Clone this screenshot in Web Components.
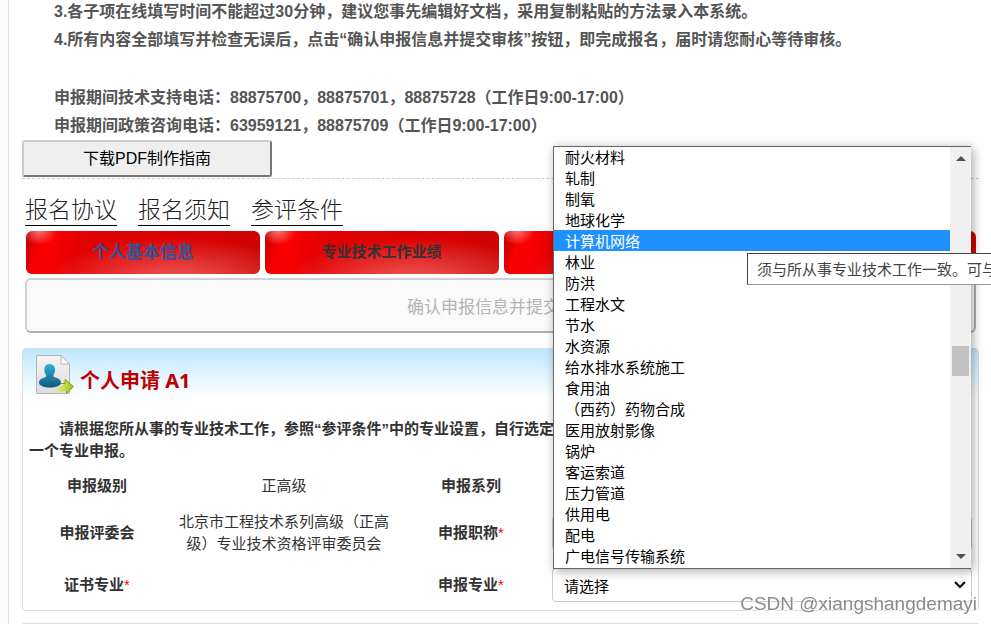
<!DOCTYPE html>
<html lang="zh-CN">
<head>
  <meta charset="utf-8">
  <title>个人申请</title>
  <style>
    body {
      margin: 0;
      overflow: hidden;
      background: #fafafa;
      color: #333;
      font: 15px/22px "Liberation Sans", "Noto Sans CJK SC", sans-serif;
    }
  </style>
</head>
<body>
  <apply-page>
    <notice-text>
      <p>3.各子项在线填写时间不能超过30分钟，建议您事先编辑好文档，采用复制粘贴的方法录入本系统。</p>
      <p>4.所有内容全部填写并检查无误后，点击“确认申报信息并提交审核”按钮，即完成报名，届时请您耐心等待审核。</p>
      <p class="gap">申报期间技术支持电话：88875700，88875701，88875728（工作日9:00-17:00）</p>
      <p>申报期间政策咨询电话：63959121，88875709（工作日9:00-17:00）</p>
    </notice-text>
    <guide-bar>下载PDF制作指南</guide-bar>
    <doc-links></doc-links>
    <step-tabs>
      <step-tab active>个人基本信息</step-tab>
      <step-tab>专业技术工作业绩</step-tab>
      <step-tab></step-tab>
      <step-tab></step-tab>
    </step-tabs>
    <submit-bar>确认申报信息并提交审核</submit-bar>
    <form-card>
      <span slot="title">个人申请 A1</span>
      <span slot="intro">请根据您所从事的专业技术工作，参照“参评条件”中的专业设置，自行选定<br>一个专业申报。</span>
      <apply-table></apply-table>
    </form-card>
    <form-card empty></form-card>
  </apply-page>
  <water-mark>CSDN @xiangshangdemayi</water-mark>

  <script>
    // small helper, every element here only needs a shadow root with markup
    function define(name, html, setup) {
      customElements.define(name, class extends HTMLElement {
        constructor() {
          super()
          this.attachShadow({ mode: 'open' })
          this.shadowRoot.innerHTML = html
        }

        connectedCallback() {
          if (setup) setup(this, this.shadowRoot)
        }
      })
    }

    define('apply-page', `
      <style>
        :host {
          display: block;
          margin-left: 8px;
          padding: 0 12px 0 13px;
          border-left: 1px solid #ddd;
          background: #fff;
        }
      </style>
      <slot></slot>
    `)

    define('notice-text', `
      <style>
        :host {
          display: block;
          margin-top: -2px;
          padding: 0 32px;
          color: #555;
          font-size: 16px;
          font-weight: bold;
          line-height: 28px;
          white-space: nowrap;
        }
        ::slotted(p) { margin: 0; }
        ::slotted(.gap) { margin-top: 30px; }
      </style>
      <slot></slot>
    `)

    define('guide-bar', `
      <style>
        :host {
          display: block;
          padding-bottom: 1px;
          border-bottom: 1px dashed #ccc;
        }
        button {
          display: block;
          width: 250px;
          height: 37px;
          padding: 0 0 3px;
          border: 2px solid;
          border-color: #ccc #767676 #767676 #ccc;
          border-radius: 3px;
          background: #efefef;
          color: #000;
          font: 16px "Liberation Sans", "Noto Sans CJK SC", sans-serif;
        }
      </style>
      <button type="button"><slot></slot></button>
    `)

    define('doc-links', `
      <style>
        :host {
          display: flex;
          gap: 21px;
          padding: 16px 3px 5px;
        }
        a {
          border-bottom: 1px solid #000;
          color: #222;
          font-size: 23px;
          font-weight: 300;
          line-height: 30px;
          text-decoration: none;
        }
      </style>
      <a href="#agreement">报名协议</a>
      <a href="#notice">报名须知</a>
      <a href="#conditions">参评条件</a>
    `)

    define('step-tabs', `
      <style>
        :host {
          display: flex;
          gap: 5px;
          padding: 0 3px 0 4px;
        }
      </style>
      <slot></slot>
    `)

    define('step-tab', `
      <style>
        :host { display: block; flex: 1; }
        button {
          display: block;
          width: 100%;
          height: 43px;
          padding: 0 0 4px;
          border: 0;
          border-radius: 6px;
          background:
            radial-gradient(ellipse 18px 14px at 13px 0, rgba(255, 150, 150, .75), transparent),
            radial-gradient(ellipse 55% 100% at 64% 115%, rgba(255, 150, 150, .6), transparent),
            linear-gradient(105deg, #b80000 0, #f80000 7%, #fa0000 12%, #e20000 24%, #d80000 70%, #cc0404);
          color: #333;
          font: bold 15px "Noto Sans CJK SC", sans-serif;
        }
        :host([active]) button { color: #2f549b; font-size: 17px; }
      </style>
      <button type="button"><slot></slot></button>
    `)

    define('submit-bar', `
      <style>
        :host { display: block; padding: 4px 3px 15px; }
        button {
          display: block;
          width: 100%;
          height: 55px;
          border: 2px solid;
          border-color: #d0d0d0 #b0b0b0 #b0b0b0 #d0d0d0;
          border-radius: 6px;
          background: #fafafa;
          color: #b4b4b4;
          font: 17px "Noto Sans CJK SC", sans-serif;
        }
      </style>
      <button type="button" disabled><slot></slot></button>
    `)

    define('form-card', `
      <style>
        :host {
          display: block;
          margin-bottom: 12px;
          padding: 6px 6px 3px;
          border: 1px solid #ddd;
          border-radius: 4px;
          background: linear-gradient(#bfe7ff, #fff 48px);
        }
        :host([empty]) {
          margin-bottom: 0;
          padding: 1px 0 0;
          border-bottom: 0;
          border-radius: 4px 4px 0 0;
          background: #fff;
        }
        :host([empty]) header, :host([empty]) p { display: none; }
        header { display: flex; gap: 5px; padding-left: 6px; }
        h2 {
          margin: 0;
          padding-top: 11px;
          color: #b00;
          font: bold 20px/30px "Noto Sans", "Noto Sans CJK SC", sans-serif;
        }
        p {
          margin: 22px 0 7px;
          font-weight: bold;
          line-height: 22px;
          text-indent: 30px;
          white-space: nowrap;
        }
      </style>
      <header>
        <svg width="40" height="41" viewBox="0 0 40 41" aria-hidden="true">
          <defs>
            <linearGradient id="paper" x2="0" y2="1">
              <stop stop-color="#f4f4f4"/><stop offset="1" stop-color="#dcdcdc"/>
            </linearGradient>
            <linearGradient id="person" x2="0" y2="1">
              <stop stop-color="#2cb2dc"/><stop offset="1" stop-color="#10597b"/>
            </linearGradient>
            <linearGradient id="arrow">
              <stop stop-color="#d8f07c" stop-opacity="0"/><stop offset=".5" stop-color="#cbe456"/><stop offset="1" stop-color="#97bf1c"/>
            </linearGradient>
          </defs>
          <path d="M1.500 .5H26L34.500 9V38.500H1.500Z" fill="url(#paper)" stroke="#b4b4b4"/>
          <path d="M26 .5V9H34.500Z" fill="#fff" stroke="#b4b4b4"/>
          <path d="M14.500 9C18.500 9 20.500 12 20 16C19.700 18 18 20 18.500 21.500C20 23 26 23 26 27.500C26 31 21 32.500 15 32.500S4 31 4 27.500C4 23 10 23 11 21.500C11.500 20 9.600 18 9.400 16C9 12 10.800 9 14.500 9Z" fill="url(#person)"/>
          <path d="M16 34Q25 33 30 28.500V24.500L38.500 31.500L31.500 38.500V36Q24 37 16 34Z" fill="url(#arrow)"/>
          <path d="M26 28.500H30V24.500L38.500 31.500L31.500 38.500V36" fill="none" stroke="#7ea31b"/>
        </svg>
        <h2><slot name="title"></slot></h2>
      </header>
      <p><slot name="intro"></slot></p>
      <slot></slot>
    `)

    define('apply-table', `
      <style>
        :host { display: block; }
        table {
          width: 100%;
          border-collapse: collapse;
          table-layout: fixed;
        }
        col.label { width: 136px; }
        col.value { width: 238px; }
        th, td { padding: 0 13px; text-align: center; }
        th { padding: 0; font-weight: bold; }
        td:last-child { padding: 0 0 0 13px; }
        tr { height: 34px; }
        tr.tall { height: 60px; }
        tr.last { height: 44px; }
        i { color: #f00; font-style: normal; font-weight: normal; }
      </style>
      <table>
        <colgroup><col class="label"><col class="value"><col class="label"><col></colgroup>
        <tr>
          <th>申报级别</th><td>正高级</td><th>申报系列</th><td></td>
        </tr>
        <tr class="tall">
          <th>申报评委会</th><td>北京市工程技术系列高级（正高级）专业技术资格评审委员会</td>
          <th>申报职称<i>*</i></th><td><pick-field label="申报职称"></pick-field></td>
        </tr>
        <tr class="last">
          <th>证书专业<i>*</i></th><td></td>
          <th>申报专业<i>*</i></th>
          <td>
            <pick-field label="申报专业" value="请选择">
              <option-menu></option-menu>
            </pick-field>
          </td>
        </tr>
      </table>
    `)

    define('pick-field', `
      <style>
        :host { display: block; position: relative; }
        label { display: flex; position: relative; align-items: center; }
        select {
          appearance: none;
          width: 100%;
          height: 34px;
          padding: 0 11px;
          border: 1px solid #ccc;
          border-radius: 4px;
          background: #fff;
          color: #000;
          font: 15px "Noto Sans CJK SC", sans-serif;
        }
        svg { position: absolute; right: 6px; pointer-events: none; }
        slot {
          display: block;
          position: absolute;
          right: 1px;
          bottom: calc(100% - 1px);
          left: 1px;
          z-index: 2;
        }
      </style>
      <label>
        <select></select>
        <svg width="12" height="8" viewBox="0 0 12 8"><path d="M1 1L6 6L11 1" fill="none" stroke="#000" stroke-width="2"/></svg>
      </label>
      <slot></slot>
    `, (host, root) => {
      const select = root.querySelector('select')
      select.setAttribute('aria-label', host.getAttribute('label'))
      if (host.hasAttribute('value')) {
        select.innerHTML = `<option>${host.getAttribute('value')}</option>`
      }
    })

    const majors = ['耐火材料', '轧制', '制氧', '地球化学', '计算机网络', '林业', '防洪',
      '工程水文', '节水', '水资源', '给水排水系统施工', '食用油', '（西药）药物合成',
      '医用放射影像', '锅炉', '客运索道', '压力管道', '供用电', '配电', '广电信号传输系统']

    define('option-menu', `
      <style>
        :host {
          display: flex;
          border: 1px solid #666;
          border-right: 0;
          background: #fff;
          box-shadow: 2px 2px 10px rgba(0, 0, 0, .35);
          color: #000;
          font-family: "Noto Sans CJK SC", sans-serif;
        }
        ul {
          flex: 1;
          margin: -1px 0 2px;
          padding: 0;
          list-style: none;
          text-align: left;
        }
        li { padding: 0 11px; line-height: 21px; cursor: default; }
        li[aria-selected="true"] { background: #1e90ff; color: #fff; }
        .bar {
          display: flex;
          flex-direction: column;
          align-items: center;
          width: 21px;
          background: #f0f0f0;
        }
        .bar svg { margin: 9px 0 8px; }
        .bar svg:last-child { margin: 8px 0 9px; }
        .before { flex: 178; }
        .thumb { width: 17px; height: 30px; background: #c1c1c1; }
        .after { flex: 170; }
        hover-tip { position: absolute; top: 107px; left: 194px; }
      </style>
      <ul role="listbox" aria-label="申报专业"></ul>
      <div class="bar">
        <svg width="10" height="5"><path d="M0 5L5 0L10 5Z" fill="#505050"/></svg>
        <div class="before"></div>
        <div class="thumb"></div>
        <div class="after"></div>
        <svg width="10" height="5"><path d="M0 0L5 5L10 0Z" fill="#505050"/></svg>
      </div>
      <hover-tip>须与所从事专业技术工作一致。可与</hover-tip>
    `, (host, root) => {
      root.querySelector('ul').innerHTML = majors
        .map(m => `<li role="option" aria-selected="${m === '计算机网络'}">${m}</li>`)
        .join('')
    })

    define('hover-tip', `
      <style>
        :host {
          display: block;
          padding: 0 9px;
          border: 1px solid #444;
          border-bottom-color: #999;
          background: #fff;
          color: #444;
          font-size: 15px;
          line-height: 30px;
          white-space: nowrap;
        }
      </style>
      <slot></slot>
    `)

    define('water-mark', `
      <style>
        :host {
          position: fixed;
          right: 14px;
          bottom: 8px;
          z-index: 3;
          color: rgba(110, 110, 110, .8);
          font-size: 19px;
          line-height: 24px;
          text-shadow: 1px 1px 1px #fff;
        }
      </style>
      <slot></slot>
    `)
  </script>
</body>
</html>
